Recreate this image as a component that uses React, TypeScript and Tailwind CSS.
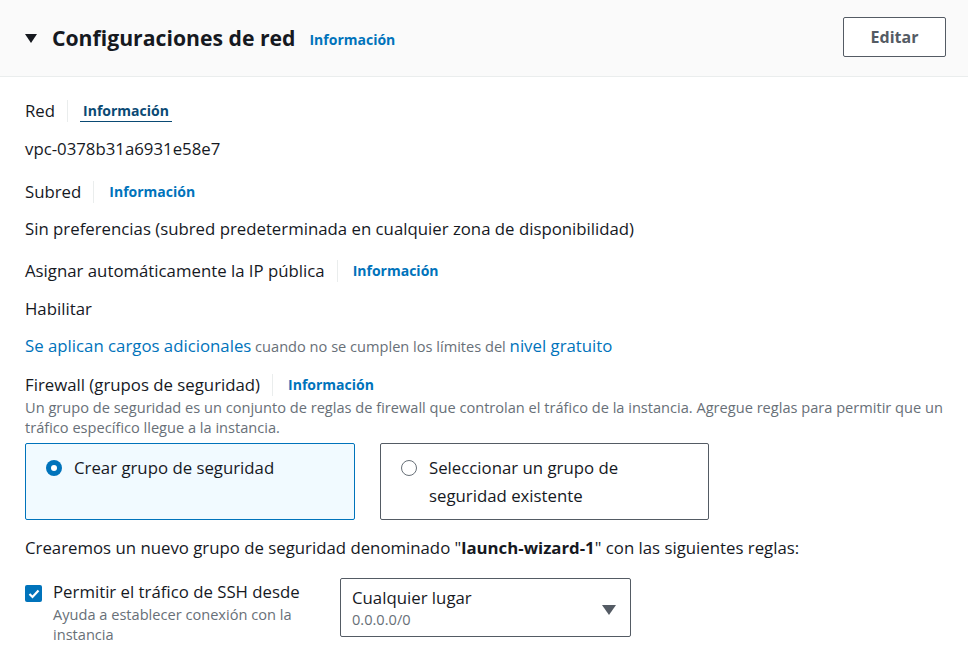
import React from "react";

const font = { fontFamily: '"Open Sans", "Noto Sans", Arial, sans-serif' };

function Info({ dark = false }: { dark?: boolean }) {
  return (
    <span
      className={
        dark
          ? "text-[14px] font-bold text-[#0a4a74] border-b border-[#0a4a74] leading-[20px] px-[3px]"
          : "text-[14px] font-bold text-[#0073bb] leading-[20px] px-[3px]"
      }
    >
      Información
    </span>
  );
}

function Label({ text, dark = false }: { text: string; dark?: boolean }) {
  return (
    <div className="flex items-center">
      <span className="text-[16.8px] text-[#16191f] leading-[22px]">{text}</span>
      <span className="mx-[12px] h-[22px] w-px bg-[#eaeded]" />
      <Info dark={dark} />
    </div>
  );
}

export default function App() {
  return (
    <div style={font} className="w-[968px] h-[657px] overflow-hidden bg-white text-[#16191f]">
      <div className="flex items-center justify-between h-[77px] bg-[#fafafa] border-b border-[#eaeded] pl-[25px] pr-[22px]">
        <div className="flex items-center">
          <svg width="12" height="10" viewBox="0 0 12 10" className="mr-[15px]">
            <polygon points="0,1 12,1 6,10" fill="#16191f" />
          </svg>
          <span className="text-[21.2px] font-bold leading-[28px]">Configuraciones de red</span>
          <span className="ml-[11px] mt-[2px]">
            <Info />
          </span>
        </div>
        <button className="h-[40px] w-[103px] -mt-[2px] border border-[#545b64] rounded-[2px] bg-white text-[16px] font-bold text-[#545b64]">
          Editar
        </button>
      </div>

      <div className="pl-[25px] pt-[23px]">
        <Label text="Red" dark />
        <div className="mt-[16px] text-[16.8px] leading-[22px]">vpc-0378b31a6931e58e7</div>
        <div className="mt-[21px]">
          <Label text="Subred" />
        </div>
        <div className="mt-[15px] text-[16.8px] leading-[22px]">
          Sin preferencias (subred predeterminada en cualquier zona de disponibilidad)
        </div>
        <div className="mt-[20px]">
          <Label text="Asignar automáticamente la IP pública" />
        </div>
        <div className="mt-[16px] text-[16.8px] leading-[22px]">Habilitar</div>
        <div className="mt-[15px] leading-[22px]">
          <span className="text-[16.8px] text-[#0073bb]">Se aplican cargos adicionales</span>
          <span className="text-[14.6px] text-[#687078]"> cuando no se cumplen los límites del </span>
          <span className="text-[16.8px] text-[#0073bb]">nivel gratuito</span>
        </div>
        <div className="mt-[17px]">
          <Label text="Firewall (grupos de seguridad)" />
        </div>
        <div className="mt-[1px] pr-[20px] text-[14.6px] leading-[20px] text-[#687078]">
          Un grupo de seguridad es un conjunto de reglas de firewall que controlan el tráfico de la instancia. Agregue reglas para permitir que un tráfico específico llegue a la instancia.
        </div>
        <div className="mt-[6px] flex gap-[25px]">
          <div className="w-[330px] h-[77px] border border-[#0073bb] bg-[#f1faff] rounded-[2px] px-[20px] pt-[12px] flex items-start">
            <span className="mt-[4px] w-[16px] h-[16px] rounded-full bg-[#0073bb] flex items-center justify-center shrink-0">
              <span className="w-[6px] h-[6px] rounded-full bg-white" />
            </span>
            <span className="ml-[12px] text-[16.8px] leading-[24px]">Crear grupo de seguridad</span>
          </div>
          <div className="w-[329px] h-[77px] border border-[#545b64] bg-white rounded-[2px] pl-[20px] pt-[12px] flex items-start">
            <span className="mt-[4px] w-[16px] h-[16px] rounded-full border border-[#687078] bg-white shrink-0" />
            <span className="ml-[12px] w-[220px] text-[16.8px] leading-[28px] -mt-[2px]">
              Seleccionar un grupo de seguridad existente
            </span>
          </div>
        </div>
        <div className="mt-[17px] text-[16.8px] leading-[22px]">
          Crearemos un nuevo grupo de seguridad denominado "<b>launch-wizard-1</b>" con las siguientes reglas:
        </div>
        <div className="mt-[20px] flex items-start">
          <div className="w-[290px] flex items-start">
            <span className="mt-[6px] w-[17px] h-[17px] rounded-[2px] bg-[#0073bb] flex items-center justify-center shrink-0">
              <svg width="12" height="10" viewBox="0 0 12 10">
                <polyline points="1.5,5 4.5,8 10.5,1.5" fill="none" stroke="white" strokeWidth="2.2" />
              </svg>
            </span>
            <div className="ml-[11px]">
              <div className="text-[16.8px] leading-[24px] pt-[1px] whitespace-nowrap">Permitir el tráfico de SSH desde</div>
              <div className="text-[14.6px] leading-[20px] text-[#687078] pr-[10px]">
                Ayuda a establecer conexión con la instancia
              </div>
            </div>
          </div>
          <div className="ml-[25px] w-[291px] h-[59px] -mt-[1px] border border-[#545b64] rounded-[2px] pl-[11px] pr-[14px] flex items-center justify-between">
            <div>
              <div className="text-[16.8px] leading-[22px]">Cualquier lugar</div>
              <div className="text-[14.6px] leading-[20px] text-[#687078]">0.0.0.0/0</div>
            </div>
            <svg width="14" height="10" viewBox="0 0 14 10" className="mt-[4px]">
              <polygon points="0,0 14,0 7,10" fill="#545b64" />
            </svg>
          </div>
        </div>
      </div>
    </div>
  );
}
